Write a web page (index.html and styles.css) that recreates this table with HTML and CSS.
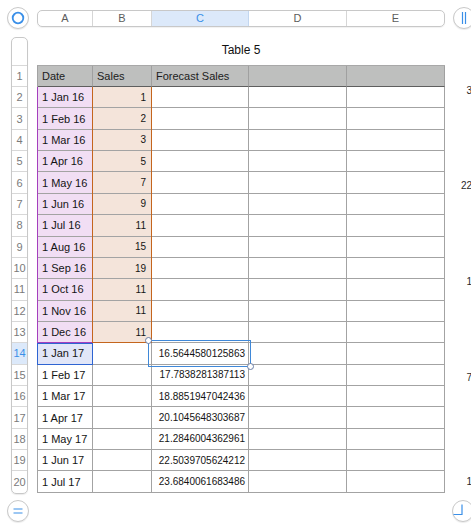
FILE: index.html
```html
<!DOCTYPE html>
<html>
<head>
<meta charset="utf-8">
<link rel="stylesheet" href="styles.css">
</head>
<body>
<div class="page">
  <div class="toprow">
    <div class="cbtn">
      <svg width="22" height="22" viewBox="0 0 22 22"><circle cx="11" cy="11" r="5.3" fill="none" stroke="#3a8fe8" stroke-width="1.8"/></svg>
    </div>
    <div class="colbar">
      <div class="ch">A</div>
      <div class="ch">B</div>
      <div class="ch sel">C</div>
      <div class="ch">D</div>
      <div class="ch last">E</div>
    </div>
    <div class="cbtn">
      <svg width="22" height="22" viewBox="0 0 22 22"><path d="M9.5 5v12M12.5 5v12" stroke="#3a8fe8" stroke-width="1.2" fill="none"/></svg>
    </div>
  </div>

  <div class="main">
    <div class="rowhdr">
      <div class="rh blank"></div>
      <div class="rh first">1</div>
      <div class="rh">2</div>
      <div class="rh">3</div>
      <div class="rh">4</div>
      <div class="rh">5</div>
      <div class="rh">6</div>
      <div class="rh">7</div>
      <div class="rh">8</div>
      <div class="rh">9</div>
      <div class="rh">10</div>
      <div class="rh">11</div>
      <div class="rh">12</div>
      <div class="rh">13</div>
      <div class="rh sel">14</div>
      <div class="rh">15</div>
      <div class="rh">16</div>
      <div class="rh">17</div>
      <div class="rh">18</div>
      <div class="rh">19</div>
      <div class="rh lastrow">20</div>
    </div>

    <div class="tablearea">
      <div class="title">Table 5</div>
      <div class="stack">
        <div class="grid">
          <div class="c hd">Date</div><div class="c hd">Sales</div><div class="c hd">Forecast Sales</div><div class="c hd"></div><div class="c hd"></div>

          <div class="c pu">1 Jan 16</div><div class="c pe num">1</div><div class="c"></div><div class="c"></div><div class="c"></div>
          <div class="c pu">1 Feb 16</div><div class="c pe num">2</div><div class="c"></div><div class="c"></div><div class="c"></div>
          <div class="c pu">1 Mar 16</div><div class="c pe num">3</div><div class="c"></div><div class="c"></div><div class="c"></div>
          <div class="c pu">1 Apr 16</div><div class="c pe num">5</div><div class="c"></div><div class="c"></div><div class="c"></div>
          <div class="c pu">1 May 16</div><div class="c pe num">7</div><div class="c"></div><div class="c"></div><div class="c"></div>
          <div class="c pu">1 Jun 16</div><div class="c pe num">9</div><div class="c"></div><div class="c"></div><div class="c"></div>
          <div class="c pu">1 Jul 16</div><div class="c pe num">11</div><div class="c"></div><div class="c"></div><div class="c"></div>
          <div class="c pu">1 Aug 16</div><div class="c pe num">15</div><div class="c"></div><div class="c"></div><div class="c"></div>
          <div class="c pu">1 Sep 16</div><div class="c pe num">19</div><div class="c"></div><div class="c"></div><div class="c"></div>
          <div class="c pu">1 Oct 16</div><div class="c pe num">11</div><div class="c"></div><div class="c"></div><div class="c"></div>
          <div class="c pu">1 Nov 16</div><div class="c pe num">11</div><div class="c"></div><div class="c"></div><div class="c"></div>
          <div class="c pu">1 Dec 16</div><div class="c pe num">11</div><div class="c"></div><div class="c"></div><div class="c"></div>

          <div class="c bl">1 Jan 17</div><div class="c"></div><div class="c num fc active">16.5644580125863</div><div class="c"></div><div class="c"></div>
          <div class="c">1 Feb 17</div><div class="c"></div><div class="c num fc">17.7838281387113</div><div class="c"></div><div class="c"></div>
          <div class="c">1 Mar 17</div><div class="c"></div><div class="c num fc">18.8851947042436</div><div class="c"></div><div class="c"></div>
          <div class="c">1 Apr 17</div><div class="c"></div><div class="c num fc">20.1045648303687</div><div class="c"></div><div class="c"></div>
          <div class="c">1 May 17</div><div class="c"></div><div class="c num fc">21.2846004362961</div><div class="c"></div><div class="c"></div>
          <div class="c">1 Jun 17</div><div class="c"></div><div class="c num fc">22.5039705624212</div><div class="c"></div><div class="c"></div>
          <div class="c">1 Jul 17</div><div class="c"></div><div class="c num fc">23.6840061683486</div><div class="c"></div><div class="c"></div>
        </div>
        <div class="grid overlay">
          <div class="range range-a"></div>
          <div class="range range-b"></div>
          <div class="range range-a14"></div>
          <div class="range range-sel">
            <span class="handle h-tl"></span>
            <span class="handle h-br"></span>
          </div>
        </div>
      </div>
    </div>

    <div class="axis">
      <div class="ax ax1">3</div>
      <div class="ax ax2">22</div>
      <div class="ax ax3">1</div>
      <div class="ax ax4">7</div>
      <div class="ax ax5">1</div>
    </div>
  </div>

  <div class="bottomrow">
    <div class="cbtn">
      <svg width="22" height="22" viewBox="0 0 22 22"><path d="M6.5 9h9M6.5 13h9" stroke="#3a8fe8" stroke-width="1.2" fill="none"/></svg>
    </div>
    <div class="cbtn">
      <svg width="22" height="22" viewBox="0 0 22 22"><path d="M10 4.5v10H1.5" stroke="#3a8fe8" stroke-width="1.2" fill="none"/></svg>
    </div>
  </div>
</div>
</body>
</html>
```

FILE: styles.css
```css
html, body {
  margin: 0;
  padding: 0;
  overflow: hidden;
  background: #ffffff;
}

.page {
  width: 480px;
  height: 528px;
  padding: 7px 0 0 7px;
  box-sizing: border-box;
  font-family: "Liberation Sans", Arial, sans-serif;
  color: #1a1a1a;
}

.toprow {
  display: flex;
  align-items: center;
  height: 22px;
}

.cbtn {
  width: 22px;
  height: 22px;
  box-sizing: border-box;
  border: 1px solid #c9c9c9;
  border-radius: 50%;
  background: #ffffff;
  box-shadow: 0 1px 1px rgba(0, 0, 0, 0.08);
  flex: none;
}

.cbtn svg {
  display: block;
  margin: -1px;
}

.colbar {
  margin-left: 8px;
  width: 408px;
  height: 17px;
  box-sizing: border-box;
  border: 1px solid #c8c8c8;
  border-radius: 5px;
  display: grid;
  grid-template-columns: 55px 59px 97px 98px 1fr;
  overflow: hidden;
  flex: none;
  box-shadow: 0 1px 1px rgba(0, 0, 0, 0.06);
}

.toprow .colbar + .cbtn {
  margin-left: 8px;
}

.ch {
  border-right: 1px solid #d6d6d6;
  font-size: 11px;
  color: #5c5c5c;
  display: flex;
  align-items: center;
  justify-content: center;
  line-height: 15px;
}

.ch.last {
  border-right: none;
}

.ch.sel {
  background: #dce9fa;
  color: #3a8fe8;
  border-right-color: #c3d7f0;
}

.main {
  display: flex;
  margin-top: 8px;
  height: 456px;
}

.rowhdr {
  margin-left: 4px;
  width: 17px;
  box-sizing: border-box;
  border: 1px solid #c8c8c8;
  border-radius: 5px;
  display: grid;
  grid-template-rows: 28px 21px repeat(19, 21.368px);
  align-self: flex-start;
  overflow: hidden;
  box-shadow: 0 1px 1px rgba(0, 0, 0, 0.08);
  flex: none;
}

.rh {
  border-bottom: 1px solid #d8d8d8;
  font-size: 11px;
  color: #7a7a7a;
  display: flex;
  align-items: center;
  justify-content: center;
}

.rh.lastrow {
  border-bottom: none;
}

.rh.sel {
  background: #dce9fa;
  color: #3a8fe8;
}

.tablearea {
  margin-left: 9px;
  width: 408px;
  flex: none;
}

.title {
  height: 28px;
  box-sizing: border-box;
  padding-top: 6px;
  line-height: 14px;
  font-size: 12px;
  text-align: center;
  color: #111;
}

.stack {
  display: grid;
}

.stack > .grid {
  grid-area: 1 / 1;
}

.grid {
  display: grid;
  grid-template-columns: 55px 59px 97px 98px 98px;
  grid-template-rows: 21px repeat(19, 21.368px);
  border-top: 1px solid #a8a8a8;
  border-left: 1px solid #a3a3a3;
}

.grid.overlay {
  border-color: transparent;
  pointer-events: none;
}

.c {
  border-right: 1px solid #a3a3a3;
  border-bottom: 1px solid #a3a3a3;
  display: flex;
  align-items: center;
  padding: 0 4px;
  font-size: 11px;
  color: #141414;
  white-space: nowrap;
  min-width: 0;
}

.c.hd {
  background: #bebfbe;
  border-bottom-color: #5e5e5e;
  border-right-color: #a0a0a0;
  color: #1c1c1c;
}

.c.num {
  justify-content: flex-end;
  font-size: 10px;
}

.c.pe {
  padding-right: 5px;
  background: #f4e4da;
}

.c.pu {
  background: #f1def4;
}

.c.bl {
  background: #e1e6f8;
}

.c.fc {
  padding-right: 3px;
}

.range {
  box-sizing: border-box;
}

.range-a {
  grid-column: 1;
  grid-row: 2 / 14;
  margin-left: -1px;
  border: 1px solid #a43fbd;
  border-top-width: 0;
}

.range-b {
  grid-column: 2;
  grid-row: 2 / 14;
  margin-left: -1px;
  border: 1px solid #c4651d;
  border-top-width: 0;
}

.range-a14 {
  grid-column: 1;
  grid-row: 14;
  margin-left: -1px;
  border: 1px solid #2e64d2;
}

.range-sel {
  grid-column: 3;
  grid-row: 14;
  margin: -3px -2px -2px -4px;
  border: 1px solid #3f88d8;
  position: relative;
}

.handle {
  position: absolute;
  width: 7px;
  height: 7px;
  box-sizing: border-box;
  border: 1px solid #6a7ea6;
  border-radius: 50%;
  background: #ffffff;
}

.h-tl {
  left: -4px;
  top: -4px;
}

.h-br {
  right: -4px;
  bottom: -4px;
}

.axis {
  width: 27px;
  flex: none;
  display: flex;
  flex-direction: column;
  text-align: right;
  font-size: 10px;
  line-height: 12px;
  color: #2a2a2a;
}

.ax1 { margin-top: 48px; }
.ax2 { margin-top: 83px; }
.ax3 { margin-top: 84px; }
.ax4 { margin-top: 84px; }
.ax5 { margin-top: 92px; }

.bottomrow {
  margin-top: 7px;
  width: 467px;
  display: flex;
  justify-content: space-between;
}
```
